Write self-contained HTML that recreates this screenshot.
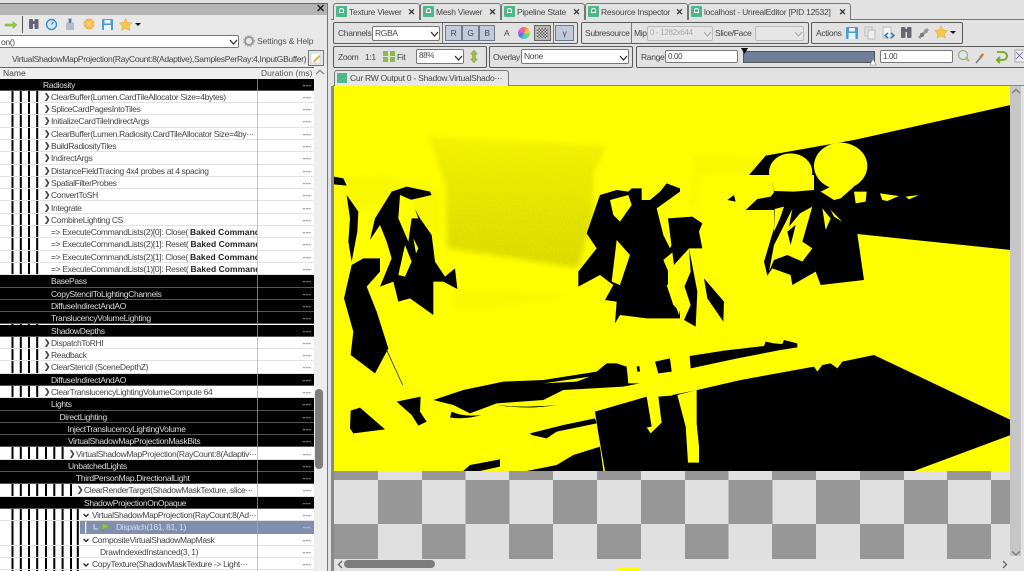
<!DOCTYPE html>
<html><head><meta charset="utf-8">
<style>
html,body{margin:0;padding:0;width:1024px;height:571px;overflow:hidden;background:#e2e2e2}
body{position:relative;font-family:"Liberation Sans","Noto Sans CJK JP",sans-serif;font-size:8.5px;letter-spacing:-.33px;color:#444;filter:blur(.3px)}
.a{position:absolute;white-space:nowrap}
.r{position:absolute;left:0;width:314px;height:12.3px;line-height:12px;box-sizing:border-box;border-bottom:1px solid #e2e2e2}
.r.k{background:#000;color:#ddd;border-bottom:1px solid #555}
.r span{position:absolute;top:0;white-space:nowrap}
.r span.c{font-weight:bold;font-size:7.5px}
.r span.x{width:206px;overflow:hidden}
.r span.x b{letter-spacing:.05px;color:#222}
.r i{position:absolute;right:3px;top:0;font-style:normal;letter-spacing:0}
.r.w{background:transparent}
.box{position:absolute;border:1px solid #5a5a5a;border-radius:2px;box-sizing:border-box}
.in{position:absolute;background:#fff;border:1px solid #777;border-radius:2px;box-sizing:border-box;line-height:12px;padding-left:2px;color:#444}
.tab{position:absolute;top:3px;height:17px;background:#e2e2e2;border:1px solid #777;border-bottom:0;border-radius:3px 3px 0 0;box-sizing:border-box;line-height:16px;color:#444;letter-spacing:-.25px}
.tab b{position:absolute;left:2px;top:2px;width:11px;height:11px;background:#4fb88b;border-radius:1px}
.tab b:after{content:"";position:absolute;left:3px;top:2px;width:5px;height:5px;border:1px solid #fff;border-radius:3px 3px 0 0;box-sizing:border-box}
.tab span{position:absolute;left:15px;top:0}
.tab u{position:absolute;right:4px;top:0;text-decoration:none;font-weight:bold;font-size:9px;color:#333}
.btn{position:absolute;top:25px;height:16px;background:#c3cbda;border:1px solid #6d7b90;box-sizing:border-box;text-align:center;line-height:14px;color:#445}
</style></head><body>

<!-- left panel chrome -->
<div class="a" style="left:0;top:3px;width:328px;height:12px;background:#b4b4b4;border-top:1px solid #666;border-right:1px solid #666;box-sizing:border-box"></div>
<div class="a" style="left:316px;top:2px;font-size:11px;font-weight:bold;color:#222">✕</div>
<div class="a" style="left:327px;top:3px;width:1px;height:568px;background:#777"></div>
<div class="a" style="left:0;top:15px;width:327px;height:53px;background:#e8e8e8"></div>
<svg class="a" style="left:0;top:15px" width="150" height="20" viewBox="0 15 150 20">
<path d="M5 24h8v-2.500l4 3.500-4 3.500V26H5z" fill="#9c3" stroke="#7a3" stroke-width=".5"/>
<rect x="22" y="16" width="1" height="17" fill="#555"/>
<g fill="#667"><rect x="29" y="19" width="4" height="10" rx="1"/><rect x="34.500" y="19" width="4" height="10" rx="1"/><rect x="32" y="21" width="3" height="3"/></g>
<circle cx="51.500" cy="24.500" r="5" fill="#cfe6f7" stroke="#3d8cc9" stroke-width="1.400"/><path d="M51.500 24.500l2-2.500" stroke="#356" fill="none"/>
<path d="M68 18h4v4l2 1v7h-8v-7l2-1z" fill="#b4bcc4"/><rect x="69" y="19" width="2" height="4" fill="#47a"/>
<circle cx="89" cy="24" r="5.500" fill="#f5b040"/><path d="M89 18v12M83 24h12M85 20l8 8M93 20l-8 8" stroke="#fdd9a0" stroke-width=".8"/>
<rect x="102" y="19" width="11" height="11" rx="1" fill="#4a9ad4"/><rect x="104.500" y="20" width="6" height="3.500" fill="#e8f3fb"/><rect x="104" y="25" width="7" height="5" fill="#e8f3fb"/>
<path d="M125.500 18.500l2 4 4.500.5-3 3.200 1 4.300-4.500-2-4 2 .8-4.300-3-3.200 4.400-.5z" fill="#f5c84a" stroke="#d9a53c" stroke-width=".5"/>
<path d="M135 23h6l-3 3z" fill="#111"/>
</svg>
<div class="in" style="left:-2px;top:35px;width:241px;height:13px">on()</div>
<svg class="a" style="left:229px;top:38px" width="9" height="8"><path d="M1 2l3.500 4L8 2" stroke="#333" stroke-width="1.300" fill="none"/></svg>
<svg class="a" style="left:243px;top:35px" width="12" height="12"><circle cx="6" cy="6" r="4" fill="none" stroke="#999" stroke-width="2"/><circle cx="6" cy="6" r="5.500" fill="none" stroke="#aaa" stroke-width="1" stroke-dasharray="1.500 1.500"/></svg>
<div class="a" style="left:257px;top:35px;line-height:12px;letter-spacing:-.15px;color:#555">Settings &amp; Help</div>
<div class="a" style="left:12px;top:53px;line-height:12px;color:#444">VirtualShadowMapProjection(RayCount:8(Adaptive),SamplesPerRay:4,InputGBuffer)</div>
<div class="a" style="left:308px;top:50px;width:16px;height:16px;background:#e6e6e6;border:1px solid #777;box-sizing:border-box"></div>
<svg class="a" style="left:310px;top:52px" width="12" height="12"><rect x="1" y="1" width="9" height="10" fill="#fff" stroke="#bbb" stroke-width=".5"/><path d="M3 9l6-6 1.500 1.500-6 6z" fill="#e3b54a"/></svg>

<!-- tree header -->
<div class="a" style="left:0;top:67px;width:314px;height:12px;background:#eee;border-top:1px solid #666;box-sizing:border-box;line-height:11px"><span class="a" style="left:3px;top:0;color:#444;letter-spacing:0">Name</span><span class="a" style="left:261px;top:0;color:#555;letter-spacing:0">Duration (ms)</span></div>

<!-- tree -->
<div class="a" style="left:0;top:79px;width:314px;height:492px;background:#fff"></div>
<svg class="a" style="left:0;top:79px" width="100" height="492" viewBox="0 79 100 492">
<g fill="#000">
<rect x="11.500" y="79" width="2" height="492"/><rect x="19.800" y="79" width="2" height="492"/><rect x="28" y="79" width="2" height="492"/><rect x="36.200" y="79" width="2" height="492"/>
<rect x="45" y="447" width="2" height="124"/><rect x="53.300" y="447" width="2" height="124"/><rect x="61.600" y="447" width="2" height="124"/>
<rect x="70" y="484" width="2" height="87"/><rect x="76.800" y="509" width="2" height="62"/>
</g></svg>

<div class="r k" style="top:78.5px"><span style="left:43px">Radiosity</span><i>---</i></div>
<div class="r w" style="top:90.8px"><span class="c" style="left:44px">❯</span><span style="left:51px">ClearBuffer(Lumen.CardTileAllocator Size=4bytes)</span><i>---</i></div>
<div class="r w" style="top:103.1px"><span class="c" style="left:44px">❯</span><span style="left:51px">SpliceCardPagesIntoTiles</span><i>---</i></div>
<div class="r w" style="top:115.4px"><span class="c" style="left:44px">❯</span><span style="left:51px">InitializeCardTileIndirectArgs</span><i>---</i></div>
<div class="r w" style="top:127.7px"><span class="c" style="left:44px">❯</span><span style="left:51px">ClearBuffer(Lumen.Radiosity.CardTileAllocator Size=4by···</span><i>---</i></div>
<div class="r w" style="top:140px"><span class="c" style="left:44px">❯</span><span style="left:51px">BuildRadiosityTiles</span><i>---</i></div>
<div class="r w" style="top:152.3px"><span class="c" style="left:44px">❯</span><span style="left:51px">IndirectArgs</span><i>---</i></div>
<div class="r w" style="top:164.6px"><span class="c" style="left:44px">❯</span><span style="left:51px">DistanceFieldTracing 4x4 probes at 4 spacing</span><i>---</i></div>
<div class="r w" style="top:176.9px"><span class="c" style="left:44px">❯</span><span style="left:51px">SpatialFilterProbes</span><i>---</i></div>
<div class="r w" style="top:189.2px"><span class="c" style="left:44px">❯</span><span style="left:51px">ConvertToSH</span><i>---</i></div>
<div class="r w" style="top:201.5px"><span class="c" style="left:44px">❯</span><span style="left:51px">Integrate</span><i>---</i></div>
<div class="r w" style="top:213.8px"><span class="c" style="left:44px">❯</span><span style="left:51px">CombineLighting CS</span><i>---</i></div>
<div class="r w" style="top:226.1px"><span class="x" style="left:51px">=&gt; ExecuteCommandLists(2)[0]: Close( <b>Baked Command</b></span><i>---</i></div>
<div class="r w" style="top:238.4px"><span class="x" style="left:51px">=&gt; ExecuteCommandLists(2)[1]: Reset( <b>Baked Command</b></span><i>---</i></div>
<div class="r w" style="top:250.7px"><span class="x" style="left:51px">=&gt; ExecuteCommandLists(2)[1]: Close( <b>Baked Command</b></span><i>---</i></div>
<div class="r w" style="top:263px"><span class="x" style="left:51px">=&gt; ExecuteCommandLists(1)[0]: Reset( <b>Baked Command</b></span><i>---</i></div>
<div class="r k" style="top:275.3px"><span style="left:51px">BasePass</span><i>---</i></div>
<div class="r k" style="top:287.6px"><span style="left:51px">CopyStencilToLightingChannels</span><i>---</i></div>
<div class="r k" style="top:299.9px"><span style="left:51px">DiffuseIndirectAndAO</span><i>---</i></div>
<div class="r k" style="top:312.2px"><span style="left:51px">TranslucencyVolumeLighting</span><i>---</i></div>
<div class="r k" style="top:324.5px"><span style="left:51px">ShadowDepths</span><i>---</i></div>
<div class="r w" style="top:336.8px"><span class="c" style="left:44px">❯</span><span style="left:51px">DispatchToRHI</span><i>---</i></div>
<div class="r w" style="top:349.1px"><span class="c" style="left:44px">❯</span><span style="left:51px">Readback</span><i>---</i></div>
<div class="r w" style="top:361.4px"><span class="c" style="left:44px">❯</span><span style="left:51px">ClearStencil (SceneDepthZ)</span><i>---</i></div>
<div class="r k" style="top:373.7px"><span style="left:51px">DiffuseIndirectAndAO</span><i>---</i></div>
<div class="r w" style="top:386px"><span class="c" style="left:44px">❯</span><span style="left:51px">ClearTranslucencyLightingVolumeCompute 64</span><i>---</i></div>
<div class="r k" style="top:398.3px"><span style="left:51px">Lights</span><i>---</i></div>
<div class="r k" style="top:410.6px"><span style="left:59.500px">DirectLighting</span><i>---</i></div>
<div class="r k" style="top:422.9px"><span style="left:67.500px">InjectTranslucencyLightingVolume</span><i>---</i></div>
<div class="r k" style="top:435.2px"><span style="left:68px">VirtualShadowMapProjectionMaskBits</span><i>---</i></div>
<div class="r w" style="top:447.5px"><span class="c" style="left:69px">❯</span><span style="left:76px">VirtualShadowMapProjection(RayCount:8(Adaptiv···</span><i>---</i></div>
<div class="r k" style="top:459.8px"><span style="left:68px">UnbatchedLights</span><i>---</i></div>
<div class="r k" style="top:472.1px"><span style="left:76px">ThirdPersonMap.DirectionalLight</span><i>---</i></div>
<div class="r w" style="top:484.4px"><span class="c" style="left:77px">❯</span><span style="left:84px">ClearRenderTarget(ShadowMaskTexture, slice···</span><i>---</i></div>
<div class="r k" style="top:496.7px"><span style="left:84px">ShadowProjectionOnOpaque</span><i>---</i></div>
<div class="r w" style="top:509px"><span style="left:92px">VirtualShadowMapProjection(RayCount:8(Ad···</span><i>---</i></div>
<div class="r" style="top:521.3px;left:80px;width:234px;background:#7f8fad;color:#dde;border:0"><span style="left:36px">Dispatch(161, 81, 1)</span><i>---</i></div>
<div class="r w" style="top:533.6px"><span style="left:92px">CompositeVirtualShadowMapMask</span><i>---</i></div>
<div class="r w" style="top:545.9px"><span style="left:100px">DrawIndexedInstanced(3, 1)</span><i>---</i></div>
<div class="r w" style="top:558.2px"><span style="left:92px">CopyTexture(ShadowMaskTexture -&gt; Light···</span><i>---</i></div>
<svg class="a" style="left:80px;top:509px" width="34" height="62" viewBox="80 509 34 62">
<path d="M83.500 514l2.500 2.500 2.500-2.500M83.500 539l2.500 2.500 2.500-2.500M83.500 563.500l2.500 2.500 2.500-2.500" stroke="#222" stroke-width="1.300" fill="none"/>
<rect x="85" y="521.500" width="1.300" height="12" fill="#eef"/>
<path d="M94 524v5h4" stroke="#dde" fill="none"/>
<path d="M102 523v9M102 523l8 3.500-8 3.500z" fill="#8fbf50" stroke="#6a9a40" stroke-width=".5"/>
</svg>
<div class="a" style="left:257px;top:79px;width:1px;height:492px;background:#aaa;opacity:.7"></div>

<!-- left scrollbar -->
<div class="a" style="left:314px;top:68px;width:13px;height:503px;background:#ededed"></div>
<svg class="a" style="left:315px;top:69px" width="10" height="7"><path d="M1 5l4-3.500L9 5" stroke="#888" stroke-width="1.300" fill="none"/></svg>
<div class="a" style="left:315px;top:389px;width:8px;height:80px;background:#7e7e7e;border-radius:4px"></div>
<div class="a" style="left:331px;top:19px;width:693px;height:1px;background:#777"></div>

<!-- tabs -->
<div class="tab" style="left:333px;width:87px;background:#e6e6e6"><b></b><span>Texture Viewer</span><u>✕</u></div>
<div class="tab" style="left:420px;width:81px"><b></b><span>Mesh Viewer</span><u>✕</u></div>
<div class="tab" style="left:501px;width:84px"><b></b><span>Pipeline State</span><u>✕</u></div>
<div class="tab" style="left:585px;width:103px"><b></b><span>Resource Inspector</span><u>✕</u></div>
<div class="tab" style="left:688px;width:163px"><b></b><span>localhost - UnrealEditor [PID 12532]</span><u>✕</u></div>

<!-- toolbar 1 -->
<div class="box" style="left:333px;top:22px;width:245px;height:22px"></div>
<div class="box" style="left:581px;top:22px;width:228px;height:22px"></div>
<div class="box" style="left:811px;top:22px;width:152px;height:22px"></div>
<div class="a" style="left:338px;top:27px;line-height:12px">Channels</div>
<div class="in" style="left:372px;top:26px;width:68px;height:15px">RGBA</div>
<svg class="a" style="left:430px;top:31px" width="9" height="7"><path d="M1 1l3.500 4L8 1" stroke="#333" stroke-width="1.300" fill="none"/></svg>
<div class="a" style="left:442px;top:23px;width:1px;height:20px;background:#777"></div>
<div class="btn" style="left:445px;width:17px">R</div>
<div class="btn" style="left:462px;width:17px">G</div>
<div class="btn" style="left:479px;width:16px">B</div>
<div class="a" style="left:504px;top:27px;line-height:12px">A</div>
<div class="a" style="left:518px;top:27px;width:12px;height:12px;border-radius:6px;background:conic-gradient(#f66,#fc4,#6d6,#4cd,#66e,#d6c,#f66)"></div>
<div class="a" style="left:534px;top:25px;width:17px;height:16px;background:#b9b5ad;border:1px solid #666;box-sizing:border-box"><div style="margin:2px;height:10px;background:repeating-conic-gradient(#555 0 25%,#ddd 0 50%) 0 0/3px 3px"></div></div>
<div class="a" style="left:553px;top:23px;width:1px;height:20px;background:#777"></div>
<div class="btn" style="left:555px;width:19px">γ</div>
<div class="a" style="left:585px;top:27px;line-height:12px">Subresource</div>
<div class="a" style="left:631px;top:23px;width:1px;height:20px;background:#777"></div>
<div class="a" style="left:634px;top:27px;line-height:12px">Mip</div>
<div class="in" style="left:647px;top:26px;width:66px;height:15px;background:#e6e6e6;border-color:#bbb;color:#aaa;font-size:8px">0 - 1282x644</div>
<svg class="a" style="left:703px;top:31px" width="9" height="7"><path d="M1 1l3.500 4L8 1" stroke="#aaa" stroke-width="1.200" fill="none"/></svg>
<div class="a" style="left:715px;top:27px;line-height:12px">Slice/Face</div>
<div class="in" style="left:755px;top:26px;width:49px;height:15px;background:#e6e6e6;border-color:#bbb"></div>
<svg class="a" style="left:794px;top:31px" width="9" height="7"><path d="M1 1l3.500 4L8 1" stroke="#aaa" stroke-width="1.200" fill="none"/></svg>
<div class="a" style="left:816px;top:27px;line-height:12px">Actions</div>
<svg class="a" style="left:844px;top:23px" width="118" height="20" viewBox="844 23 118 20">
<rect x="846" y="27" width="12" height="12" rx="1" fill="#4a9ad4"/><rect x="849" y="28" width="6" height="3.500" fill="#e8f3fb"/><rect x="848.500" y="33" width="7" height="6" fill="#e8f3fb"/>
<rect x="865" y="27" width="7" height="9" fill="#e4e4e4" stroke="#bbb"/><rect x="868" y="30" width="7" height="9" fill="#eee" stroke="#bbb"/>
<rect x="883" y="27" width="8" height="11" fill="#f2f2f2" stroke="#bbb"/><path d="M888 33l-3 2.500 3 2.500M891 33l3 2.500-3 2.500" stroke="#2a7ac0" stroke-width="1.500" fill="none"/>
<g fill="#667"><rect x="901" y="27" width="4.500" height="11" rx="1"/><rect x="907" y="27" width="4.500" height="11" rx="1"/><rect x="904" y="29" width="4" height="3"/></g>
<path d="M919 38l9-9" stroke="#999" stroke-width="3"/><circle cx="922" cy="35" r="2" fill="#777"/><circle cx="926" cy="31" r="2" fill="#999"/>
<path d="M941 26l2 4 4.500.5-3 3.200 1 4.300-4.500-2-4 2 .8-4.300-3-3.200 4.400-.5z" fill="#f5c84a" stroke="#d9a53c" stroke-width=".5"/>
<path d="M950 31h6l-3 3z" fill="#111"/>
</svg>

<!-- toolbar 2 -->
<div class="box" style="left:333px;top:46px;width:154px;height:22px"></div>
<div class="box" style="left:489px;top:46px;width:144px;height:22px"></div>
<div class="box" style="left:636px;top:46px;width:392px;height:22px"></div>
<div class="a" style="left:338px;top:51px;line-height:12px">Zoom</div>
<div class="a" style="left:365px;top:51px;line-height:12px">1:1</div>
<svg class="a" style="left:383px;top:50px" width="13" height="13"><g fill="#8db84a"><rect x="0" y="1" width="5" height="5"/><rect x="7" y="1" width="5" height="5"/><rect x="0" y="7" width="5" height="5"/><rect x="7" y="7" width="5" height="5"/></g></svg>
<div class="a" style="left:397px;top:51px;line-height:12px">Fit</div>
<div class="in" style="left:416px;top:49px;width:48px;height:15px;font-size:8px">88%</div>
<svg class="a" style="left:454px;top:55px" width="9" height="7"><path d="M1 1l3.500 4L8 1" stroke="#333" stroke-width="1.300" fill="none"/></svg>
<svg class="a" style="left:469px;top:49px" width="10" height="15"><path d="M5 1l3.500 4H6.500v5H8.500L5 14 1.500 10H3.500V5H1.500z" fill="#9fbf3f" stroke="#7a9a30" stroke-width=".5"/></svg>
<div class="a" style="left:493px;top:51px;line-height:12px">Overlay</div>
<div class="in" style="left:521px;top:49px;width:108px;height:15px">None</div>
<svg class="a" style="left:619px;top:55px" width="9" height="7"><path d="M1 1l3.500 4L8 1" stroke="#333" stroke-width="1.300" fill="none"/></svg>
<div class="a" style="left:641px;top:51px;line-height:12px">Range</div>
<div class="in" style="left:665px;top:50px;width:73px;height:13px;font-size:8px">0.00</div>
<div class="a" style="left:743px;top:51px;width:132px;height:12px;background:#6f7e9a;border:1px solid #555;box-sizing:border-box"></div>
<svg class="a" style="left:741px;top:47px" width="140" height="20"><path d="M0 1h7L3.500 7z" fill="#111"/><path d="M129 18l3-6 3 6z" fill="#fff" stroke="#888" stroke-width=".6"/></svg>
<div class="in" style="left:880px;top:50px;width:73px;height:13px;font-size:8px">1.00</div>
<svg class="a" style="left:956px;top:48px" width="68" height="18" viewBox="956 48 68 18">
<circle cx="963" cy="55" r="4.500" fill="#dbe8ef" stroke="#b0a67a" stroke-width="1.300"/><path d="M966 58l3 3" stroke="#c2a85a" stroke-width="2"/>
<path d="M976 63l5-6" stroke="#777" stroke-width="1.500"/><path d="M980 58l3-4" stroke="#c9793a" stroke-width="2.500"/>
<path d="M997 52h6a3 3 0 0 1 0 8h-5M1000 57l-3 3 3 3" stroke="#7aae2c" stroke-width="2" fill="none"/>
<rect x="1015" y="50" width="10" height="12" fill="#eee" stroke="#aaa"/><path d="M1016 52l7 7M1023 52l-7 7" stroke="#669" stroke-width=".8"/>
</svg>

<!-- doc tab -->
<div class="a" style="left:333px;top:85px;width:691px;height:1px;background:#888"></div>
<div class="a" style="left:334px;top:70px;width:175px;height:16px;background:#e6e6e6;border:1px solid #777;border-bottom:0;border-radius:3px 3px 0 0;box-sizing:border-box;line-height:15px"><div style="position:absolute;left:2px;top:2px;width:10px;height:10px;background:#4fb88b"></div><span class="a" style="left:15px;top:0;letter-spacing:-.25px">Cur RW Output 0 - Shadow.VirtualShado···</span></div>

<!-- image -->
<div class="a" style="left:331px;top:86px;width:3px;height:485px;background:#8a8a8a"></div>
<svg class="a" style="left:334px;top:86px" width="676" height="473" viewBox="334 86 676 473">
<defs>
<filter id="n" x="0" y="0" width="100%" height="100%"><feTurbulence type="fractalNoise" baseFrequency="1.100" numOctaves="2" seed="4"/><feColorMatrix values="0 0 0 0 1  0 0 0 0 1  0 0 0 0 0  0 0 0 3 -1.300"/></filter>
<filter id="b"><feGaussianBlur stdDeviation="3"/></filter>
<linearGradient id="g" x1="0" y1="0" x2="0" y2="1"><stop offset="0" stop-color="#f2f200"/><stop offset=".5" stop-color="#e2e200"/><stop offset="1" stop-color="#d6d600"/></linearGradient>
</defs>
<rect x="334" y="86" width="676" height="385" fill="#ff0"/>
<!-- noise -->
<g filter="url(#b)"><path d="M428 136L607 146 593 172 593 218 578 268 447 248 446 186z" fill="url(#g)"/><path d="M338 180L380 175 440 190 440 240 390 200 345 215z" fill="#f8f800"/><path d="M453 290L570 295 520 305 455 310z" fill="#f8f800"/><path d="M695 155L760 158 755 170 700 175 697 215 690 200z" fill="#f8f800"/></g>
<rect x="425" y="136" width="182" height="134" fill="#ff0" filter="url(#n)" opacity=".45" clip-path="polygon(0 0,100% 6%,90% 25%,92% 60%,84% 100%,12% 84%,12% 35%)"/>

<!-- figures from upper zooms -->
<g transform="translate(330,85) scale(.33333)" fill="#000">
<path d="M12 275L40 280 50 302 12 298z"/>
<path d="M50 330L85 380 82 440 65 530 55 470 60 400z"/>
<path d="M65 540L100 520 150 520 150 560 110 605 140 680 175 790 135 865 62 810 70 740 42 640z"/>
<path d="M120 465L135 400 185 320 230 305 300 320 305 330 240 345 270 400 305 450 315 530 345 575 375 550 382 612 340 590 310 590 310 690 240 640 205 650 190 590 150 605 185 520 170 470 150 420z"/>
<path d="M210 330L245 345 265 400 245 400 235 470 205 400z" fill="#ff0"/>
<path d="M225 480L245 530 225 575 205 570z" fill="#ff0"/>
<path d="M250 460L265 490 258 505z" fill="#ff0"/>
<path d="M170 420L195 330 180 335 145 420z" fill="#000"/>
<path d="M745 605L745 560 800 490 770 445 810 330 860 315 895 320 905 310 935 310 935 345 960 345 990 320 1010 295 1050 310 1050 700 950 700 870 690 855 715 860 650 825 645 850 600 810 570z"/>
<path d="M840 345L895 330 905 360 870 410 850 390z" fill="#ff0"/>
<path d="M860 465L900 510 870 600 845 590z" fill="#ff0"/>
<path d="M1050 320L980 370 1000 450 1020 490 1050 430z" fill="#ff0"/>
<path d="M1010 600L1050 590 1050 680 1030 660z" fill="#ff0"/>
<path d="M1000 525L1030 500 1050 560 1015 560z" fill="#ff0"/>
</g>
<g transform="translate(674,85) scale(.33333)" fill="#000">
<path d="M-18 400L55 395 85 415 75 440 85 490 45 490 70 620 65 725 30 705 50 660 30 600 0 540z"/>
<path d="M90 580L150 650 148 710 100 640z"/>
<path d="M0 670L15 695 0 695z"/>
<path d="M-18 560L45 490 50 560 25 620 15 690 -18 600z" fill="#ff0"/>
<path d="M160 345L180 330 185 350z"/>
<!-- wedge -->
<path d="M225 270L275 212 540 165 1010 60 1010 495 550 447 570 585 440 600 425 560 355 600 350 570 295 550 280 572 270 530 300 430 300 375 215 375 250 342 290 335 300 322 290 270z"/>
<ellipse cx="350" cy="262" rx="65" ry="57" fill="#ff0"/>
<ellipse cx="500" cy="243" rx="80" ry="70" fill="#ff0"/>
<path d="M290 270L420 270 420 315 360 320 300 318z" fill="#ff0"/>
<path d="M440 320L480 300 540 305 500 340 480 345z" fill="#ff0"/>
<path d="M540 320L578 320 575 350 545 355z" fill="#ff0"/>
<path d="M618 325L675 333 640 348 625 345z" fill="#ff0"/>
<path d="M695 335L735 330 705 343z" fill="#ff0"/>
<path d="M470 375L505 410 480 395z" fill="#ff0"/>
<path d="M302 372L330 365 318 400 300 440z" fill="#ff0"/>
<path d="M355 372L345 425 378 385 415 365 385 470 415 490 385 530 340 510 300 525 285 560 300 480z" fill="#ff0"/>
<path d="M340 440L365 420 350 480z"/>
<path d="M445 370L470 400 455 435z" fill="#ff0"/>
</g>
<g transform="translate(330,340) scale(.33333)" fill="#000">
<path d="M310 180L400 150 520 125 640 120 800 95 830 70 860 70 890 80 895 130 930 130 880 140 700 150 640 180 500 190 420 220 370 195z"/>
<path d="M640 130L780 110 740 125z" fill="#ff0"/>
<path d="M975 65L1020 55 1025 95 985 100z"/>
<path d="M920 80L928 78 930 95 922 95z"/>
<path d="M200 185L272 170 270 215 290 245 265 257 245 225z"/>
<path d="M62 212L90 203 165 268 70 280 60 265z"/>
<path d="M600 280L700 255 795 235 800 250 680 275 650 295 605 285z"/>
<path d="M400 393L420 375 510 358 510 380 450 393z"/>
<path d="M590 393L680 375 730 345 810 320 820 393z"/>
<path d="M795 215L950 170 965 260 950 262 962 280 995 248 985 170 1050 165 1050 393 825 393 805 280z"/>
<path d="M170 30L218 135" stroke="#000" stroke-width="2" fill="none"/>
<path d="M500 195Q590 205 680 195 590 210 500 195z"/>
<path d="M365 215Q400 232 455 225 400 240 360 232z"/>
</g>
<g transform="translate(674,340) scale(.33333)" fill="#000">
<path d="M47 48L150 32 270 18 275 5 300 10 325 12 330 0 370 10 370 22 320 30 190 55 50 85z"/>
<path d="M-5 165L70 150 200 120 420 80 430 95 445 75 470 70 490 85 505 65 600 45 1010 240 1010 285 720 393 -5 393z"/>
<path d="M10 165L68 150 68 250 75 320 75 368 42 368 35 260z" fill="#ff0"/>
</g>
</svg>

<!-- checker -->
<svg class="a" style="left:334px;top:471px" width="676" height="88" viewBox="334 471 676 88" shape-rendering="crispEdges">
<rect x="334" y="471" width="676" height="88" fill="#e0e0e0"/>
<g fill="#979797">
<rect x="334" y="471" width="44" height="9"/><rect x="422" y="471" width="43.500" height="9"/><rect x="509" y="471" width="44" height="9"/><rect x="597" y="471" width="44" height="9"/><rect x="685" y="471" width="43.500" height="9"/><rect x="772" y="471" width="44" height="9"/><rect x="860" y="471" width="44" height="9"/><rect x="947" y="471" width="44" height="9"/>
<rect x="378" y="480" width="44" height="44"/><rect x="465.500" y="480" width="44" height="44"/><rect x="553" y="480" width="44" height="44"/><rect x="641" y="480" width="44" height="44"/><rect x="728.500" y="480" width="44" height="44"/><rect x="816" y="480" width="44" height="44"/><rect x="904" y="480" width="44" height="44"/><rect x="991" y="480" width="19" height="44"/>
<rect x="334" y="524" width="44" height="35"/><rect x="422" y="524" width="43.500" height="35"/><rect x="509" y="524" width="44" height="35"/><rect x="597" y="524" width="44" height="35"/><rect x="685" y="524" width="43.500" height="35"/><rect x="772" y="524" width="44" height="35"/><rect x="860" y="524" width="44" height="35"/><rect x="947" y="524" width="44" height="35"/>
</g></svg>

<!-- image scrollbars -->
<div class="a" style="left:1010px;top:86px;width:11px;height:470px;background:#c6c6c6"></div>
<svg class="a" style="left:1011px;top:88px" width="10" height="7"><path d="M1 5l4-3.500L9 5" stroke="#777" stroke-width="1.300" fill="none"/></svg>
<svg class="a" style="left:1011px;top:550px" width="10" height="7"><path d="M1 1.500l4 3.500 4-3.500" stroke="#777" stroke-width="1.300" fill="none"/></svg>
<svg class="a" style="left:337px;top:560px" width="6" height="9"><path d="M5 1L1.500 4.500 5 8" stroke="#666" stroke-width="1.300" fill="none"/></svg>
<svg class="a" style="left:1002px;top:560px" width="6" height="9"><path d="M1 1l3.500 3.500L1 8" stroke="#666" stroke-width="1.300" fill="none"/></svg>
<div class="a" style="left:344px;top:560px;width:91px;height:8px;background:#7c7c7c;border-radius:4px"></div>
<div class="a" style="left:617px;top:568px;width:23px;height:3px;background:#ff0"></div>
</body></html>
